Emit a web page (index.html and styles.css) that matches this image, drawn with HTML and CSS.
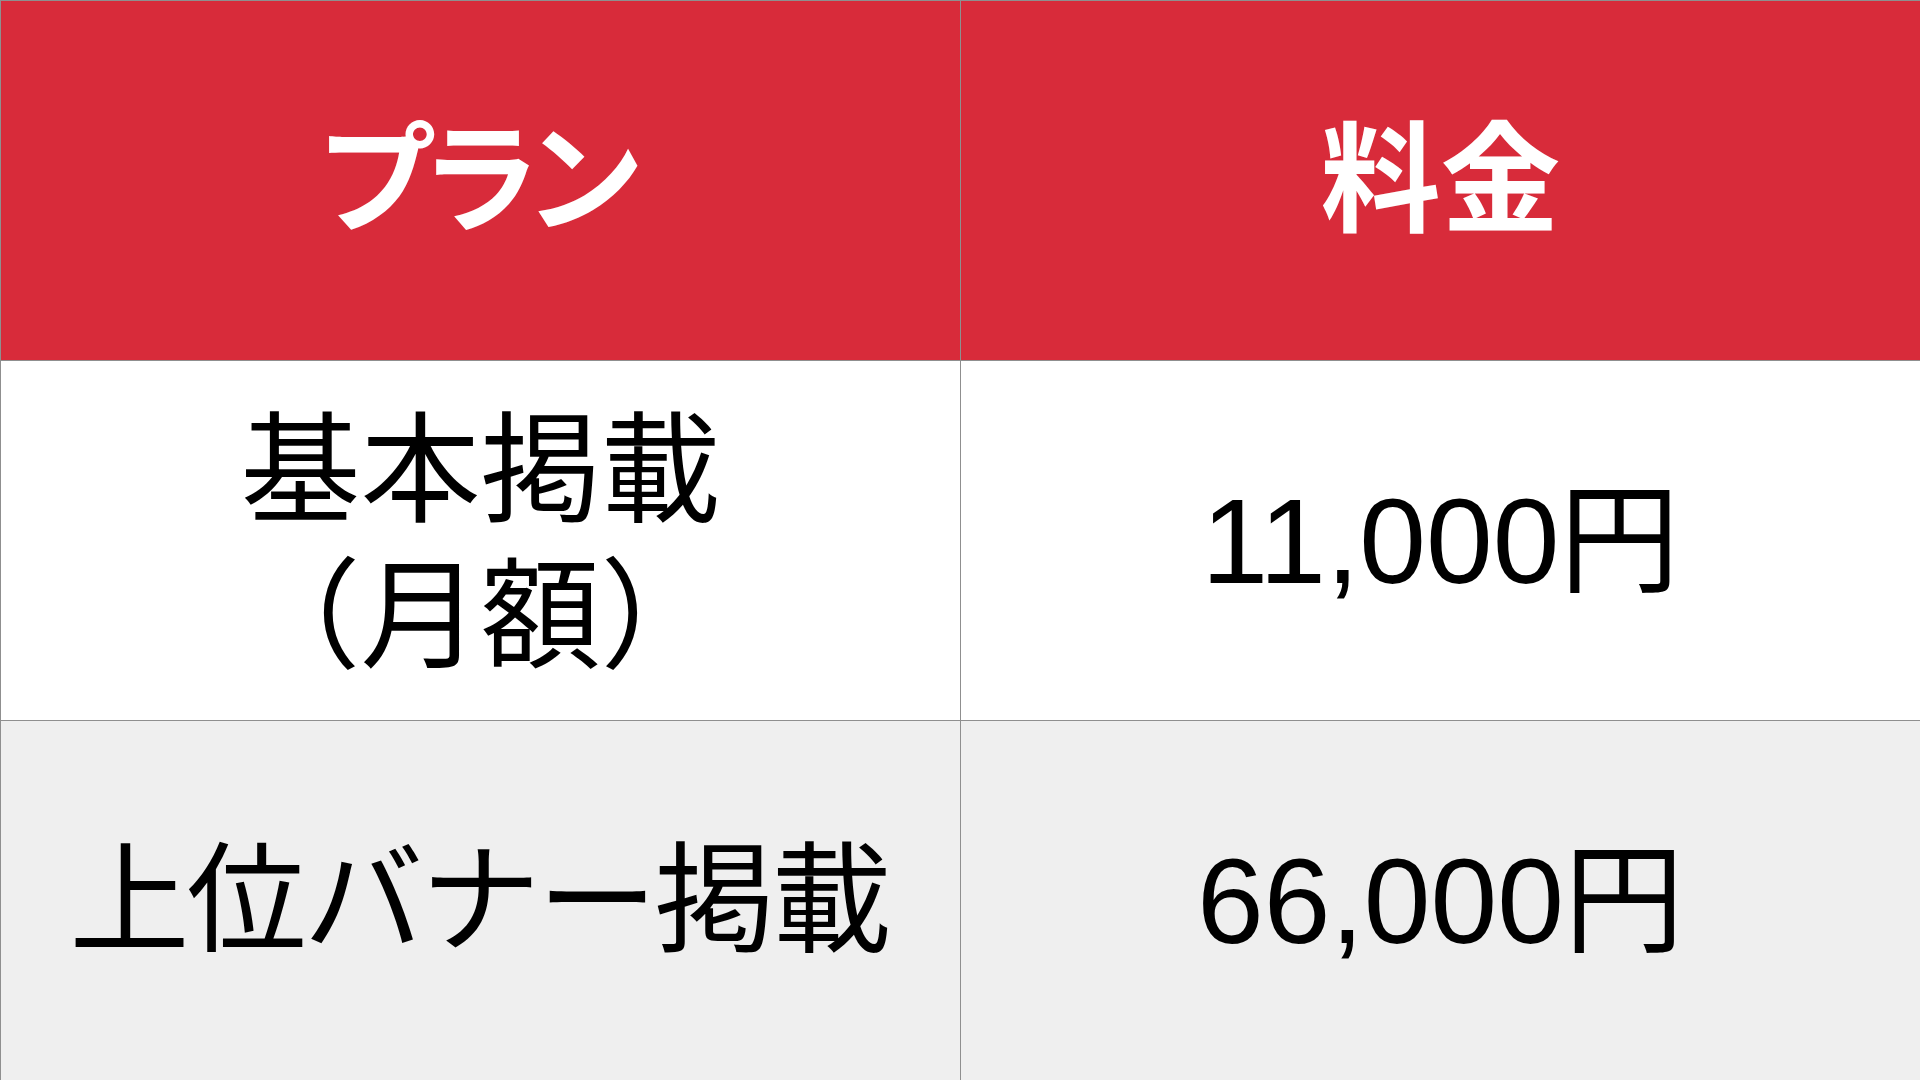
FILE: index.html
```html
<!DOCTYPE html>
<html lang="ja">
<head>
<meta charset="utf-8">
<title>料金</title>
<link rel="stylesheet" href="styles.css">
</head>
<body>
<div class="table">
  <div class="cell head"><span class="plan-title">プラン</span></div>
  <div class="cell head">料金</div>
  <div class="cell body white"><span class="two-line">基本掲載<br>（月額）</span></div>
  <div class="cell body white price">11,000円</div>
  <div class="cell body gray"><span class="banner">上位バナー掲載</span></div>
  <div class="cell body gray price">66,000円</div>
</div>
</body>
</html>
```
FILE: styles.css
```css
html, body {
  margin: 0;
  padding: 0;
  width: 1920px;
  height: 1080px;
  overflow: hidden;
  background: #ffffff;
}
.table {
  display: grid;
  grid-template-columns: 960px 960px;
  grid-template-rows: 360px 360px 360px;
  width: 1920px;
  height: 1080px;
}
.cell {
  box-sizing: border-box;
  border-left: 1px solid #8f8f8f;
  border-top: 1px solid #8f8f8f;
  display: flex;
  align-items: center;
  justify-content: center;
  text-align: center;
  font-family: "Liberation Sans", "Noto Sans CJK JP", sans-serif;
  font-size: 120px;
  line-height: 146px;
}
.head {
  background: #d82b3a;
  color: #ffffff;
  font-weight: bold;
}
.plan-title {
  letter-spacing: -16px;
  margin-left: -16px;
}
.body {
  color: #000000;
}
.two-line {
  padding-top: 6px;
}
.banner {
  letter-spacing: -3px;
  margin-left: -3px;
}
.white {
  background: #ffffff;
}
.gray {
  background: #efefef;
}
```
